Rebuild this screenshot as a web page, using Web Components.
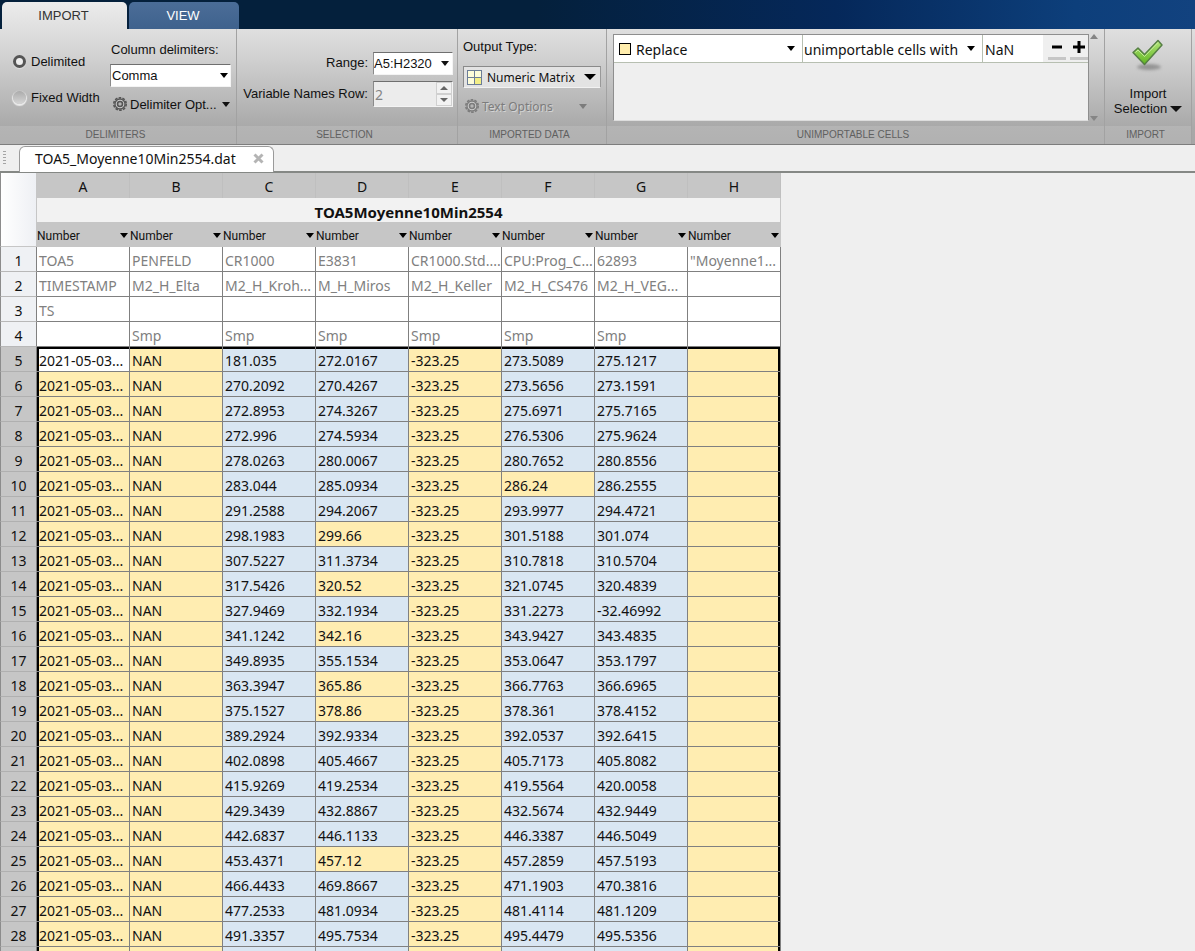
<!DOCTYPE html>
<html lang="en">
<head>
<meta charset="utf-8">
<title>Import - TOA5_Moyenne10Min2554.dat</title>
<style>
  html, body { margin: 0; height: 100%; }
  body { background: #efefef; font-family: "Liberation Sans", Arial, sans-serif; font-size: 13px; color: #111; overflow: hidden; }
</style>
</head>
<body>
<import-tool></import-tool>

<script>
const controls = `
  * { box-sizing: border-box; }
  button, select, input { font: inherit; color: inherit; margin: 0; padding: 0; border: 0; border-radius: 0; background: none; outline: 0; }
  .pick { position: relative; display: flex; align-items: center; }
  .pick select { appearance: none; width: 100%; height: 100%; cursor: pointer; }
  .pick::after { content: ""; position: absolute; right: 2px; border: 4px solid transparent; border-top: 5px solid #000; border-bottom: 0; pointer-events: none; }
  .arrow { width: 0; height: 0; border: 4px solid transparent; border-top: 5px solid currentColor; border-bottom: 0; }
  .arrow.big { border-width: 6px; border-top-width: 6px; border-bottom: 0; }
  .well { background: #fff; border: 1px solid #f4f4f4; border-top-color: #6f6f6f; border-left-color: #8a8a8a; }
`;

function component(name, css, html, setup) {
  customElements.define(name, class extends HTMLElement {
    constructor() {
      super();
      this.attachShadow({ mode: "open" }).innerHTML = `<style>${controls}${css}</style>${html}`;
    }
    connectedCallback() { if (setup) setup(this, this.shadowRoot); }
  });
}

component("gear-icon", `
  :host { display: block; width: 14px; height: 14px; }
  svg { display: block; }
`, `<svg width="14" height="14" viewBox="0 0 14 14" fill="none" stroke="currentColor" aria-hidden="true">
  <circle cx="7" cy="7" r="6.2" stroke-width="1.600" stroke-dasharray="2.600 1.270"/>
  <circle cx="7" cy="7" r="5" fill="#cfcfcf" stroke-width="1.300"/>
  <circle cx="7" cy="7" r="2.500" fill="#b5b5b5" stroke-width="1.600"/>
</svg>`);

component("ribbon-tabs", `
  :host { display: block; height: 29px; background: linear-gradient(90deg, #04203c 0%, #04203c 45%, #05285a 70%, #0d3f7b 90%, #12427f 100%); }
  nav { display: flex; gap: 2px; padding: 2px 2px 0; height: 100%; }
  button { height: 27px; width: 110px; padding-right: 2px; border-radius: 5px 5px 0 0; background: linear-gradient(#4b6d98, #3f628d); color: #fff; }
  button[aria-selected="true"] { width: 125px; background: linear-gradient(#ececec, #dfdfdf); color: #333; }
`, `<nav role="tablist"><button role="tab" aria-selected="true">IMPORT</button><button role="tab" aria-selected="false">VIEW</button></nav>`);

component("ribbon-group", `
  :host { display: flex; flex-direction: column; border-right: 1px solid #a2a2a2; min-width: 0; }
  .body { flex: 1; min-height: 0; }
  footer { height: 18px; line-height: 17px; padding-right: 5px; text-align: center; font-size: 10px; color: #606060; background: rgba(255,255,255,.13); }
`, `<div class="body"><slot></slot></div><footer></footer>`, (el, root) => {
  root.querySelector("footer").textContent = el.getAttribute("label");
});

component("delimiter-panel", `
  :host { display: flex; padding: 0 5px 0 12px; justify-content: space-between; }
  .modes { display: flex; flex-direction: column; gap: 16px; padding-top: 22px; }
  .modes label { display: flex; align-items: center; gap: 4px; height: 20px; white-space: nowrap; }
  input { appearance: none; width: 13px; height: 13px; margin: 1px; border-radius: 50%; background: linear-gradient(#ababab, #d6d6d6); box-shadow: 0 1px 1px 1px #ececec; }
  input:checked { border: 3px solid #555; background: #eee; box-shadow: 0 1px 1px #e2e2e2; }
  .options { width: 121px; padding-top: 12px; }
  .options label { display: block; padding-left: 1px; line-height: 18px; }
  .pick { height: 23px; margin-top: 5px; }
  .pick select { padding-left: 1px; }
  button { display: flex; align-items: center; gap: 3px; width: 100%; height: 20px; margin-top: 7px; padding: 0 1px 0 3px; color: #111; }
  gear-icon { color: #555; }
  .arrow { margin-left: auto; }
`, `<div class="modes">
  <label><input type="radio" name="mode" checked>Delimited</label>
  <label><input type="radio" name="mode">Fixed Width</label>
</div>
<div class="options">
  <label for="delim">Column delimiters:</label>
  <div class="pick well"><select id="delim"><option>Comma</option></select></div>
  <button><gear-icon></gear-icon><span>Delimiter Opt...</span><span class="arrow"></span></button>
</div>`);

component("selection-panel", `
  :host { display: grid; grid-template-columns: auto 80px; justify-content: end; align-items: center; gap: 6px 5px; padding: 23px 4px 0 0; }
  label { text-align: right; white-space: nowrap; padding-bottom: 2px; }
  .combo { display: flex; height: 23px; align-items: center; }
  .combo input { width: 64px; height: 100%; }
  .combo button { width: 14px; height: 100%; display: grid; place-items: center; }
  .spin { display: flex; height: 26px; background: #ececec; color: #858585; }
  .spin input { appearance: textfield; flex: 1; min-width: 0; padding-left: 1px; font: 14px "Noto Sans", sans-serif; }
  .steps { display: grid; grid-template-rows: 1fr 1fr; width: 16px; }
  .steps button { display: grid; place-items: center; border: 1px solid #d0d0d0; background: #f2f2f2; color: #666; }
  .steps .arrow { border-width: 4px; border-top-width: 4px; border-bottom: 0; }
  .up { transform: rotate(180deg); }
`, `<label for="range">Range:</label>
<div class="combo well"><input id="range" type="text" value="A5:H2320"><button aria-label="Choose range"><span class="arrow"></span></button></div>
<label for="row">Variable Names Row:</label>
<div class="spin well"><input id="row" type="number" value="2" disabled>
  <div class="steps"><button aria-label="Increase" disabled><span class="arrow up"></span></button><button aria-label="Decrease" disabled><span class="arrow"></span></button></div>
</div>`);

component("output-panel", `
  :host { display: block; padding: 8px 5px 0; }
  label { display: block; line-height: 20px; }
  .type { height: 22px; margin-top: 9px; background: #e3e3e3; border: 1px solid #8a8a8a; border-bottom-color: #f2f2f2; border-right-color: #999; font: 12px "Noto Sans", sans-serif; }
  .type select { padding-left: 23px; }
  .type svg { position: absolute; left: 3px; }
  .type.pick::after { border: 6px solid transparent; border-top: 6px solid #000; border-bottom: 0; right: 4px; }
  button { display: flex; align-items: center; gap: 3px; height: 20px; width: 100%; margin-top: 8px; padding: 0 14px 0 2px; color: #7c7c7c; font: 12px "Noto Sans", sans-serif; text-shadow: 1px 1px #d4d4d4; }
  .arrow { margin-left: auto; }
`, `<label for="out">Output Type:</label>
<div class="pick type">
  <svg width="15" height="15" viewBox="0 0 15 15" aria-hidden="true"><rect x=".5" y=".5" width="14" height="14" fill="#fdfcd9" stroke="#6c7d97"/><path d="M8 8h6v6H8z" fill="#f2ee86"/><path d="M7.500 1v13M1 7.500h13" stroke="#6c7d97"/></svg>
  <select id="out"><option>Numeric Matrix</option></select>
</div>
<button disabled><gear-icon></gear-icon><span>Text Options</span><span class="arrow"></span></button>`);

component("rules-panel", `
  :host { display: flex; padding: 5px 5px 0 6px; height: 100%; font: 14px "Noto Sans", sans-serif; }
  .list { flex: 1; height: 87px; background: #efefef; border: 1px solid #8e8e8e; border-bottom-color: #ddd; }
  .rule { display: flex; height: 28px; border-bottom: 1px solid #b7bfb1; background: #fff; }
  .action { flex: 1; padding-left: 5px; }
  .action i { width: 12px; height: 12px; flex: none; border: 1px solid #000; background: #ffedad; margin-right: 5px; }
  .what { width: 181px; border-left: 1px solid #b7bfb1; border-right: 1px solid #b7bfb1; }
  .what select { padding-left: 1px; }
  .pick select { padding-top: 1px; }
  .pick::after { right: 7px; }
  input { width: 60px; padding: 1px 0 0 2px; }
  .edit { display: flex; gap: 4px; padding: 2px 0 0 5px; background: #efefef; }
  .edit button { width: 18px; height: 23px; border-bottom: 3px solid #c6c6c6; display: grid; place-items: center; }
  .scroll { display: flex; flex-direction: column; justify-content: space-between; width: 10px; height: 87px; align-items: center; color: #858585; }
  .up { transform: rotate(180deg); }
`, `<div class="list"><div class="rule">
  <div class="pick action"><i></i><select aria-label="Action"><option>Replace</option></select></div>
  <div class="pick what"><select aria-label="Condition"><option>unimportable cells with</option></select></div>
  <input type="text" aria-label="Replacement" value="NaN">
  <div class="edit">
    <button aria-label="Remove rule"><svg width="12" height="12"><path d="M1 6h10" stroke="#000" stroke-width="3"/></svg></button>
    <button aria-label="Add rule"><svg width="12" height="12"><path d="M0 6h12M6 0v12" stroke="#000" stroke-width="3"/></svg></button>
  </div>
</div></div>
<div class="scroll"><span class="arrow up"></span><span class="arrow"></span></div>`);

component("import-panel", `
  :host { display: block; }
  button { display: flex; flex-direction: column; align-items: center; width: 100%; padding-top: 10px; line-height: 15px; cursor: pointer; }
  svg { margin-bottom: 13px; }
  .line { display: flex; align-items: center; gap: 3px; }
`, `<button>
  <svg width="34" height="34" viewBox="0 0 34 34" aria-hidden="true">
    <defs><linearGradient id="g" x1="0" y1="0" x2="0" y2="1"><stop offset="0" stop-color="#b5e67c"/><stop offset="1" stop-color="#5fb51f"/></linearGradient>
    <filter id="b" x="-20%" y="-100%" width="140%" height="300%"><feGaussianBlur stdDeviation="1.500"/></filter></defs>
    <ellipse cx="18" cy="28" rx="12" ry="3" fill="#6e6e6e" opacity=".6" filter="url(#b)"/>
    <path d="M2 13.500L7 9l6.500 6.500L27 1.500l4 4.500L13.500 25.500z" fill="url(#g)" stroke="#567f45" stroke-width="1.500" stroke-linejoin="round"/>
    <path d="M4.500 13.500l2.500-2.500 6.500 6.500L27 3.500" fill="none" stroke="#dcf6b6" opacity=".7"/>
  </svg>
  <span>Import</span><span class="line">Selection<span class="arrow big"></span></span>
</button>`);

component("document-tab", `
  :host { display: flex; height: 28px; padding-top: 1px; background: #efefef; border-bottom: 2px solid #858885; }
  .grip { width: 20px; }
  .grip i { display: block; width: 3px; height: 14px; margin: 5px 0 0 3px; background: repeating-linear-gradient(#a5a5a5 0 1px, transparent 1px 3px); }
  .tab { display: flex; align-items: center; height: 26px; gap: 17px; padding: 0 8px 2px 15px; background: #fff; border: 1px solid #9a9a9a; border-bottom: 0; border-radius: 6px 6px 0 0; margin-left: -1px; font: 14px "Noto Sans", sans-serif; }
  button { display: grid; width: 12px; height: 12px; place-items: center; }
`, `<div class="grip"><i></i></div><div class="tab"><span><slot></slot></span>
<button aria-label="Close"><svg width="11" height="11"><path d="M1.500 1.500l8 8M9.500 1.500l-8 8" stroke="#b4b4b4" stroke-width="3"/></svg></button></div>`);

const headerRows = [
  ["TOA5", "PENFELD", "CR1000", "E3831", "CR1000.Std....", "CPU:Prog_C...", "62893", "\"Moyenne1..."],
  ["TIMESTAMP", "M2_H_Elta", "M2_H_Kroh...", "M_H_Miros", "M2_H_Keller", "M2_H_CS476", "M2_H_VEG...", ""],
  ["TS", "", "", "", "", "", "", ""],
  ["", "Smp", "Smp", "Smp", "Smp", "Smp", "Smp", ""]
];
const readings = `181.035 272.0167 273.5089 275.1217
270.2092 270.4267 273.5656 273.1591
272.8953 274.3267 275.6971 275.7165
272.996 274.5934 276.5306 275.9624
278.0263 280.0067 280.7652 280.8556
283.044 285.0934 286.24 286.2555
291.2588 294.2067 293.9977 294.4721
298.1983 299.66 301.5188 301.074
307.5227 311.3734 310.7818 310.5704
317.5426 320.52 321.0745 320.4839
327.9469 332.1934 331.2273 -32.46992
341.1242 342.16 343.9427 343.4835
349.8935 355.1534 353.0647 353.1797
363.3947 365.86 366.7763 366.6965
375.1527 378.86 378.361 378.4152
389.2924 392.9334 392.0537 392.6415
402.0898 405.4667 405.7173 405.8082
415.9269 419.2534 419.5564 420.0058
429.3439 432.8867 432.5674 432.9449
442.6837 446.1133 446.3387 446.5049
453.4371 457.12 457.2859 457.5193
466.4433 469.8667 471.1903 470.3816
477.2533 481.0934 481.4114 481.1209
491.3357 495.7534 495.4479 495.5356`.split("\n").map(line => line.split(" "));

component("data-grid", `
  :host { display: block; flex: 1; min-height: 0; overflow: auto; scrollbar-width: none; font: 14px "Noto Sans", sans-serif; }
  table { table-layout: fixed; width: 781px; border-collapse: separate; border-spacing: 0; }
  col { width: 93px; }
  col.index { width: 37px; }
  th, td { height: 25px; padding: 3px 2px 0; line-height: 20px; text-align: left; font-weight: 400; white-space: nowrap; overflow: hidden; }
  th:first-child { padding: 3px 0 0; text-align: center; border-left: 1px solid #8c8c8c; }
  thead th { background: #c6c6c6; text-align: center; border-right: 1px solid #bfbfbf; }
  thead th.corner { background: linear-gradient(90deg, #fff, #eef0f4); border-right: 1px solid #c6c6c6; border-bottom: 1px solid #c6c6c6; }
  thead .name th { height: 24px; background: #f2f2f2; border: 0; border-right: 1px solid #c6c6c6; font-weight: 700; font-size: 15px; }
  thead .types th { padding: 1px 0 0; border: 0; font: 12px Roboto, sans-serif; }
  .types .pick::after { right: 2px; }
  .types .pick { height: 24px; }
  .types .pick select { padding-top: 1px; }
  tbody th { background: #eff1f4; border-right: 1px solid #808080; border-bottom: 1px solid #b8b8b8; }
  tbody td { background: #fff; color: #808080; border-right: 1px solid #808080; border-bottom: 1px solid #808080; }
  .data th { background: #c6c6c6; border-bottom-color: #b0b0b0; }
  .data td { background: #d9e6f2; color: #111; }
  .data td.bad { background: #ffedb1; }
  .data td.active { background: #fff; }
  .data td:nth-child(2) { box-shadow: inset 2px 0 #000; }
  .data td:last-child { box-shadow: inset -2px 0 #000; }
  .data.first td { box-shadow: inset 0 2px #000; }
  .data.first td:nth-child(2) { box-shadow: inset 2px 2px #000; }
  .data.first td:last-child { box-shadow: inset -2px 2px #000; }
`, `<table><colgroup><col class="index"><col><col><col><col><col><col><col><col></colgroup><thead></thead><tbody></tbody></table>`, (el, root) => {
  const letters = [..."ABCDEFGH"];
  root.querySelector("thead").innerHTML =
    `<tr><th class="corner" rowspan="3"></th>${letters.map(l => `<th scope="col">${l}</th>`).join("")}</tr>
     <tr class="name"><th colspan="8">TOA5Moyenne10Min2554</th></tr>
     <tr class="types">${letters.map(l => `<th><div class="pick"><select aria-label="Type of column ${l}"><option>Number</option></select></div></th>`).join("")}</tr>`;
  root.querySelector(".name th").style.borderLeft = "0";
  root.querySelector(".types th").style.borderLeft = "0";
  const flagged = text => text === "" || /^2021|NAN|\.\d\d$/.test(text);
  const row = (n, cells, data) => `<tr class="${data ? "data" : ""}${n === 5 ? " first" : ""}"><th scope="row">${n || ""}</th>${
    cells.map((c, i) => `<td class="${data ? (n === 5 && i === 0 ? "active" : flagged(c) ? "bad" : "") : ""}">${c}</td>`).join("")}</tr>`;
  root.querySelector("tbody").innerHTML =
    headerRows.map((cells, i) => row(i + 1, cells, false)).join("") +
    readings.map(([c, d, f, g], i) => row(i + 5, ["2021-05-03...", "NAN", c, d, "-323.25", f, g, ""], true)).join("") +
    `<tr class="data"><th></th>${letters.map(l => `<td class="${"ABEH".includes(l) ? "bad" : ""}"></td>`).join("")}</tr>`;
});

component("import-tool", `
  :host { display: flex; flex-direction: column; height: 100vh; }
  .strip { display: flex; height: 116px; background: linear-gradient(#dfdfdf, #d4d4d4 20%, #a9a9a9 85%, #a6a6a6); border-bottom: 1px solid #7d7d7d; padding-right: 3px; }
  ribbon-group { flex: none; }
  .w1 { width: 237px; } .w2 { width: 221px; } .w3 { width: 149px; } .w5 { width: 87px; }
  .w4 { flex: 1; }
`, `<ribbon-tabs></ribbon-tabs>
<div class="strip">
  <ribbon-group class="w1" label="DELIMITERS"><delimiter-panel></delimiter-panel></ribbon-group>
  <ribbon-group class="w2" label="SELECTION"><selection-panel></selection-panel></ribbon-group>
  <ribbon-group class="w3" label="IMPORTED DATA"><output-panel></output-panel></ribbon-group>
  <ribbon-group class="w4" label="UNIMPORTABLE CELLS"><rules-panel></rules-panel></ribbon-group>
  <ribbon-group class="w5" label="IMPORT"><import-panel></import-panel></ribbon-group>
</div>
<document-tab>TOA5_Moyenne10Min2554.dat</document-tab>
<data-grid></data-grid>`);
</script>
</body>
</html>
